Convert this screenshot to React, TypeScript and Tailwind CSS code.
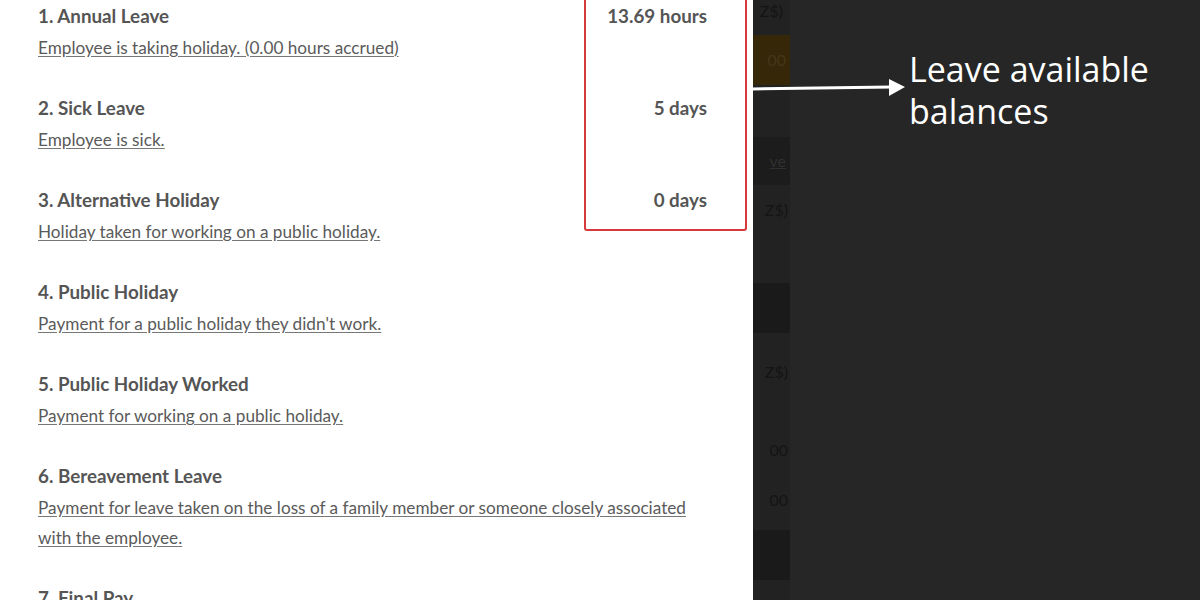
import React from 'react';

const leaveTypes = [
    { title: '1. Annual Leave', desc: 'Employee is taking holiday. (0.00 hours accrued)', balance: '13.69 hours' },
    { title: '2. Sick Leave', desc: 'Employee is sick.', balance: '5 days' },
    { title: '3. Alternative Holiday', desc: 'Holiday taken for working on a public holiday.', balance: '0 days' },
    { title: '4. Public Holiday', desc: "Payment for a public holiday they didn't work." },
    { title: '5. Public Holiday Worked', desc: 'Payment for working on a public holiday.' },
    {
        title: '6. Bereavement Leave',
        desc: 'Payment for leave taken on the loss of a family member or someone closely associated with the employee.',
    },
    { title: '7. Final Pay', desc: 'Final payment.' },
];

function LeaveRow({ title, desc, balance }: { title: string; desc: string; balance?: string }) {
    return (
        <div className="flex flex-col">
            <div className="flex justify-between text-[18.8px] leading-[24px] font-bold text-[#555]">
                <span>{title}</span>
                {balance && <span>{balance}</span>}
            </div>
            <a className="mt-[5px] text-[17.2px] leading-[30px] text-[#5a5a5a] underline decoration-[#777] underline-offset-2 cursor-pointer">
                {desc}
            </a>
        </div>
    );
}

function BackgroundStrip() {
    // what shows of the page behind the panel
    return (
        <div className="w-[37px] shrink-0 h-full bg-[#222] flex flex-col overflow-hidden text-[16px] text-[#141414] font-['Lato',sans-serif]">
            <div className="h-[22px] flex items-center justify-end pr-[7px]">Z$)</div>
            <div className="h-[13px]" />
            <div className="h-[50px] bg-[#362709] flex items-center justify-end pr-[4px] text-[#45361a]">00</div>
            <div className="h-[52px]" />
            <div className="h-[48px] bg-[#1c1c1c] flex items-center justify-end pr-[4px] underline text-[#303030]">ve</div>
            <div className="h-[14px]" />
            <div className="h-[22px] flex items-center justify-end pr-[2px]">Z$)</div>
            <div className="h-[62px]" />
            <div className="h-[50px] bg-[#1a1a1a]" />
            <div className="h-[28px]" />
            <div className="h-[22px] flex items-center justify-end pr-[2px]">Z$)</div>
            <div className="h-[56px]" />
            <div className="h-[22px] flex items-center justify-end pr-[2px]">00</div>
            <div className="h-[28px]" />
            <div className="h-[22px] flex items-center justify-end pr-[2px]">00</div>
            <div className="h-[19px]" />
            <div className="h-[50px] bg-[#1a1a1a]" />
        </div>
    );
}

export default function App() {
    return (
        <div className="relative w-[1200px] h-[600px] flex bg-[#262626] overflow-hidden">
            <div className="relative w-[753px] shrink-0 h-full bg-white pl-[38px] pr-[46px] pt-[4px] flex flex-col gap-[33px] font-['Lato',sans-serif]">
                {leaveTypes.map((t) => (
                    <LeaveRow key={t.title} {...t} />
                ))}
            </div>
            <BackgroundStrip />

            {/* annotation */}
            <div className="absolute left-[584px] top-[-10px] w-[163px] h-[241px] border-2 border-[#d63a3a] rounded-[3px]" />
            <svg className="absolute left-[752px] top-[76px]" width="156" height="24" viewBox="0 0 156 24">
                <line x1="0" y1="13" x2="140" y2="11" stroke="white" strokeWidth="3" />
                <polygon points="137,3 153,11 137,20" fill="white" />
            </svg>
            <div className="absolute left-[909px] top-[48px] text-[34px] leading-[42px] text-white font-['Open_Sans',sans-serif]">
                Leave available
                <br />
                balances
            </div>
        </div>
    );
}
